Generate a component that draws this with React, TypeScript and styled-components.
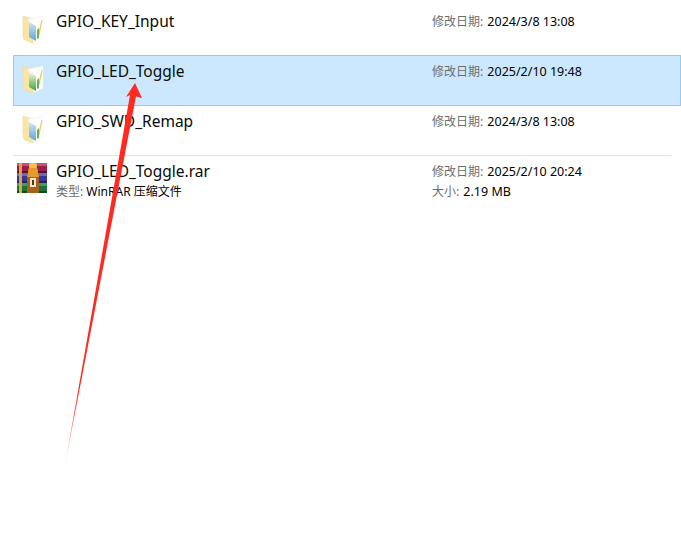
import React from "react";
import styled, { createGlobalStyle } from "styled-components";

const Global = createGlobalStyle`
  html, body { margin: 0; padding: 0; background: #fff; }
  body { font-family: "Noto Sans", "Noto Sans CJK SC", sans-serif; }
`;

const Page = styled.div`
  position: relative;
  width: 681px;
  height: 556px;
  overflow: hidden;
  box-sizing: border-box;
  padding: 5px 0 0 13px;
  background: #fff;
`;

const Row = styled.div<{ $selected?: boolean }>`
  box-sizing: border-box;
  display: grid;
  grid-template-columns: 42px 377px 1fr;
  align-items: start;
  background: ${(p) => (p.$selected ? "#cce8ff" : "transparent")};
  outline: ${(p) => (p.$selected ? "1px solid #99c9ec" : "none")};
  outline-offset: -1px;
  height: ${(p) => (p.$selected ? "51px" : "50px")};
  margin-bottom: ${(p) => (p.$selected ? "-1px" : "0")};
`;

const Divider = styled.div`
  width: 658px;
  height: 1px;
  margin-bottom: -1px;
  background: #e1e1e1;
`;

const IconCell = styled.div<{ $rar?: boolean }>`
  padding: ${(p) => (p.$rar ? "8px 0 0 3px" : "10px 0 0 9px")};
  height: 36px;
`;

const NameCell = styled.div`
  display: flex;
  flex-direction: column;
  gap: 3px;
  padding: 6px 0 0 1px;
`;

const Name = styled.div`
  font-size: 15.5px;
  line-height: 20px;
  color: #0a0a0a;
  white-space: nowrap;
`;

const MetaCell = styled.div`
  display: flex;
  flex-direction: column;
  gap: 4px;
  padding-top: 9px;
`;

const Line = styled.div`
  font-size: 12px;
  line-height: 16px;
  color: #000;
  white-space: nowrap;
`;

const Label = styled.span`
  color: #6d6d6d;
`;

const Value = styled.span`
  font-size: 12.5px;
  margin-left: 1px;
`;

const ArrowSvg = styled.svg`
  position: absolute;
  left: 0;
  top: 0;
  pointer-events: none;
`;

const FolderIcon = ({ green }: { green?: boolean }) => (
  <svg width="22" height="29" viewBox="0 0 22 29">
    <defs>
      <linearGradient id={green ? "pg" : "pb"} x1="0" y1="0" x2="0" y2="1">
        <stop offset="0" stopColor={green ? "#f3f6e4" : "#cfe6f5"} />
        <stop offset="1" stopColor={green ? "#3fa63a" : "#5fa8d3"} />
      </linearGradient>
    </defs>
    <path d="M1 1 L11 4 L11 28 L3 25 Q1 24 1 21 Z" fill="#fbe5a2" stroke="#efd694" strokeWidth="0.6" />
    <path d="M6 4 L21 1 L21 23 L12 28 Z" fill="#fdfdfd" stroke="#ececec" strokeWidth="0.5" />
    <path d="M7 7 L14 11 L14 26 L7 22 Z" fill={`url(#${green ? "pg" : "pb"})`} />
    <path d="M16 20 L19.5 5 L20.5 5 L17.5 20 Z" fill="#e9c85c" />
    <path d="M15 15 L17 13 L17 23 L15 24 Z" fill="#6fb04a" />
  </svg>
);

const RarIcon = () => (
  <svg width="32" height="30" viewBox="0 0 32 30">
    <rect x="1" y="0" width="30" height="10" fill="#96204a" />
    <rect x="1" y="10" width="30" height="10" fill="#383794" />
    <rect x="1" y="20" width="30" height="10" fill="#1c7238" />
    <rect x="1" y="0" width="30" height="3" fill="#c94f74" />
    <rect x="1" y="10" width="30" height="3" fill="#6768c4" />
    <rect x="1" y="20" width="30" height="3" fill="#3e9d5c" />
    <rect x="1" y="8" width="30" height="2" fill="#5e1230" />
    <rect x="1" y="18" width="30" height="2" fill="#222266" />
    <rect x="1" y="28" width="30" height="2" fill="#104a24" />
    <rect x="3" y="0" width="3" height="30" fill="#d9a935" />
    <rect x="11" y="10" width="12" height="20" fill="#a9601f" />
    <path d="M12 10 Q12 2 17 2 Q22 2 22 10 L23 14 L11 14 Z" fill="#e59a2c" />
    <rect x="13" y="0" width="8" height="5" rx="2" fill="#f3c04a" />
    <rect x="14" y="15" width="6" height="9" fill="#f4e6c8" />
    <rect x="16" y="17" width="2" height="5" fill="#5a3212" />
  </svg>
);

const Meta = ({ date, extra }: { date: string; extra?: React.ReactNode }) => (
  <MetaCell>
    <Line>
      <Label>修改日期:</Label> <Value>{date}</Value>
    </Line>
    {extra}
  </MetaCell>
);

export default function App() {
  return (
    <Page>
      <Global />
      <Row>
        <IconCell><FolderIcon /></IconCell>
        <NameCell><Name>GPIO_KEY_Input</Name></NameCell>
        <Meta date="2024/3/8 13:08" />
      </Row>
      <Row $selected>
        <IconCell><FolderIcon green /></IconCell>
        <NameCell><Name>GPIO_LED_Toggle</Name></NameCell>
        <Meta date="2025/2/10 19:48" />
      </Row>
      <Row>
        <IconCell><FolderIcon /></IconCell>
        <NameCell><Name>GPIO_SWD_Remap</Name></NameCell>
        <Meta date="2024/3/8 13:08" />
      </Row>
      <Divider />
      <Row>
        <IconCell $rar><RarIcon /></IconCell>
        <NameCell>
          <Name>GPIO_LED_Toggle.rar</Name>
          <Line><Label>类型:</Label> WinRAR 压缩文件</Line>
        </NameCell>
        <Meta date="2025/2/10 20:24" extra={<Line><Label>大小:</Label> <Value>2.19 MB</Value></Line>} />
      </Row>
      <ArrowSvg width="681" height="556" viewBox="0 0 681 556">
        <defs>
          <linearGradient id="fade" x1="0" y1="0" x2="0" y2="1">
            <stop offset="0" stopColor="#ff2a22" />
            <stop offset="0.8" stopColor="#ff2a22" />
            <stop offset="1" stopColor="#ff2a22" stopOpacity="0.25" />
          </linearGradient>
        </defs>
        <polygon
          points="135,83 142,98 136,96.5 65,465 130,95 126,97"
          fill="url(#fade)"
        />
      </ArrowSvg>
    </Page>
  );
}
